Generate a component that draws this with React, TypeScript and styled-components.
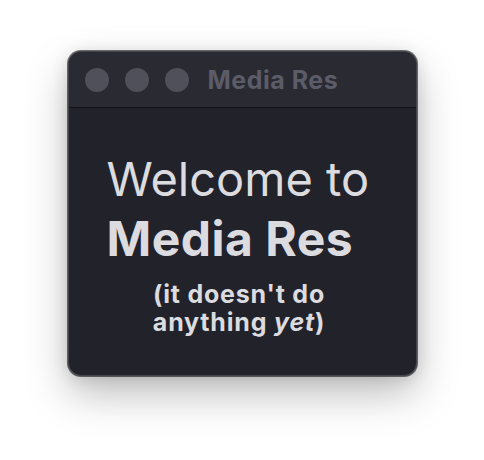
import styled, { createGlobalStyle } from "styled-components";

const GlobalStyle = createGlobalStyle`
  html, body {
    margin: 0;
    padding: 0;
    background: #ffffff;
  }
  body {
    font-family: Inter, "Noto Sans", "Liberation Sans", sans-serif;
  }
`;

const Stage = styled.div`
  min-height: 460px;
  box-sizing: border-box;
  display: flex;
  justify-content: center;
  align-items: flex-start;
  padding-top: 51px;
`;

const Window = styled.div`
  width: 349px;
  height: 325px;
  box-sizing: border-box;
  border-radius: 13px;
  overflow: hidden;
  background: #22232a;
  border: 1px solid #45454b;
  box-shadow: 0 0 0 1px rgba(0, 0, 0, 0.55), 0 18px 42px rgba(0, 0, 0, 0.26),
    0 2px 16px rgba(0, 0, 0, 0.12);
  display: flex;
  flex-direction: column;
`;

const TitleBar = styled.header`
  height: 55px;
  flex-shrink: 0;
  display: flex;
  align-items: center;
  gap: 16px;
  padding-left: 16px;
  background: #2a2a33;
  border-bottom: 1px solid #121216;
`;

const Light = styled.span`
  width: 24px;
  height: 24px;
  border-radius: 50%;
  background: #50505a;
`;

const Title = styled.h2`
  margin: 0 0 0 3px;
  font-size: 25px;
  font-weight: 700;
  color: #5c5c68;
  letter-spacing: 0.5px;
`;

const Content = styled.main`
  padding: 41px 0 0 38px;
  color: #dcdce0;
`;

const Heading = styled.h1`
  margin: 0;
  font-size: 47px;
  line-height: 60px;
  font-weight: 400;

  strong {
    font-size: 48px;
    font-weight: 700;
    letter-spacing: 0.5px;
  }
`;

const Note = styled.p`
  margin: 11px 0 0 -42px;
  width: 349px;
  text-align: center;
  font-size: 25px;
  line-height: 28px;
  letter-spacing: 0.8px;
  font-weight: 700;
`;

export default function App() {
  return (
    <>
      <GlobalStyle />
      <Stage>
        <Window>
          <TitleBar>
            <Light />
            <Light />
            <Light />
            <Title>Media Res</Title>
          </TitleBar>
          <Content>
            <Heading>
              Welcome to
              <br />
              <strong>Media Res</strong>
            </Heading>
            <Note>
              (it doesn't do
              <br />
              anything <em>yet</em>)
            </Note>
          </Content>
        </Window>
      </Stage>
    </>
  );
}
